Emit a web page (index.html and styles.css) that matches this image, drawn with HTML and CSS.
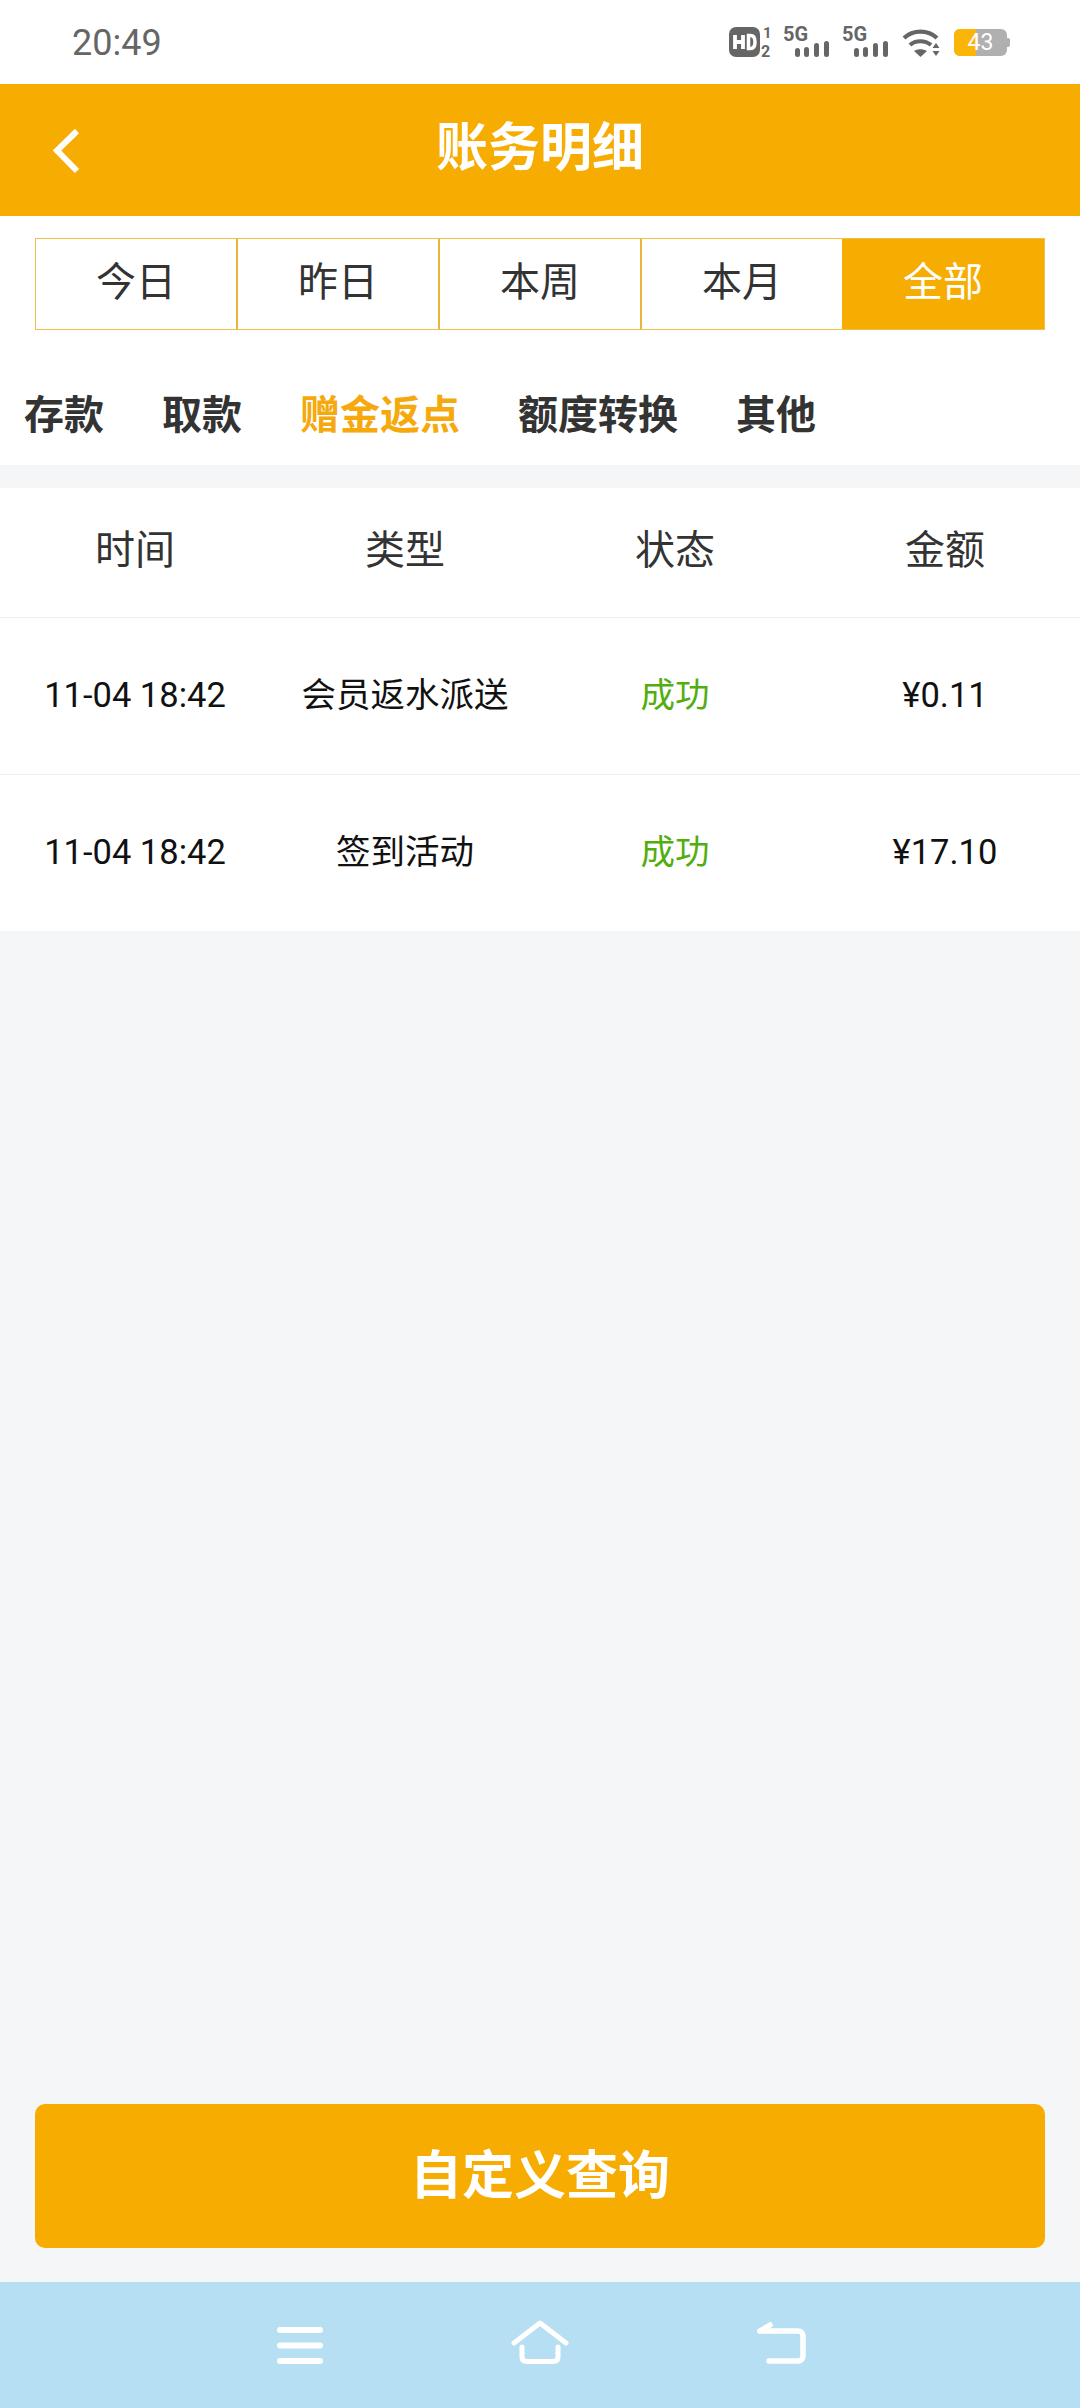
FILE: index.html
```html
<!DOCTYPE html>
<html lang="zh-CN">
<head>
<meta charset="utf-8">
<title>账务明细</title>
<link rel="stylesheet" href="styles.css">
</head>
<body>
<div class="page">
  <div class="status">
    <span class="clock">20:49</span>
    <div class="status-icons">
      <svg class="si" width="43" height="46" viewBox="0 -8 43 46"><rect x="0" y="0" width="31" height="30" rx="7" fill="#666"/><path d="M6 8v14M14 8v14M6 15h8" stroke="#fff" stroke-width="3.800" fill="none"/><path d="M19.500 8.500v13h2c3 0 4.500-2.300 4.500-6.500s-1.500-6.500-4.500-6.500z" stroke="#fff" stroke-width="3.500" fill="none"/><text x="34" y="11" class="si-t">1</text><text x="32" y="30" class="si-t2">2</text></svg>
      <svg class="si" width="48" height="46" viewBox="0 -8 48 46"><text x="0" y="14" class="si-5g">5G</text><g fill="#666"><rect x="12" y="21" width="5" height="9" rx="2.500"/><rect x="21" y="20" width="5" height="10" rx="2.500"/><rect x="31" y="16" width="5" height="14" rx="2.500"/><rect x="41" y="14" width="5" height="16" rx="2.500"/></g></svg>
      <svg class="si" width="48" height="46" viewBox="0 -8 48 46"><text x="0" y="14" class="si-5g">5G</text><g fill="#666"><rect x="12" y="21" width="5" height="9" rx="2.500"/><rect x="21" y="20" width="5" height="10" rx="2.500"/><rect x="31" y="16" width="5" height="14" rx="2.500"/><rect x="41" y="14" width="5" height="16" rx="2.500"/></g></svg>
      <svg class="si" width="40" height="46" viewBox="-2 -8 40 46"><g fill="none" stroke="#666" stroke-width="4.200"><path d="M1 11c9-8.500 24-8.500 33 0"/><path d="M7 18c5.500-5 15-5 21 0"/></g><path d="M11 24c3.500-2.500 9-2.500 13 0l-6.500 6z" fill="#666"/><path d="M33 16l3.500 5h-7zM29.500 24h7l-3.500 5z" fill="#666"/></svg>
      <div class="battery"><div class="battery-fill"></div><span class="battery-num">43</span><div class="battery-cap"></div></div>
    </div>
  </div>

  <header class="topbar">
    <svg class="back" width="28" height="46" viewBox="0 0 28 46"><path d="M25 3L5 22.500 25 43" fill="none" stroke="#fff" stroke-width="6"/></svg>
    <h1 class="title">账务明细</h1>
  </header>

  <section class="filters">
    <div class="segments">
      <div class="seg">今日</div>
      <div class="seg">昨日</div>
      <div class="seg">本周</div>
      <div class="seg">本月</div>
      <div class="seg seg-on">全部</div>
    </div>
    <nav class="tabs">
      <span class="tab">存款</span>
      <span class="tab">取款</span>
      <span class="tab tab-on">赠金返点</span>
      <span class="tab">额度转换</span>
      <span class="tab">其他</span>
    </nav>
  </section>

  <section class="table">
    <div class="row head">
      <div>时间</div><div>类型</div><div>状态</div><div>金额</div>
    </div>
    <div class="row item">
      <div class="time">11-04 18:42</div><div>会员返水派送</div><div class="ok">成功</div><div class="time">¥0.11</div>
    </div>
    <div class="row item">
      <div class="time">11-04 18:42</div><div>签到活动</div><div class="ok">成功</div><div class="time">¥17.10</div>
    </div>
  </section>

  <div class="spacer"></div>

  <div class="action"><button class="query">自定义查询</button></div>

  <footer class="navbar">
    <svg width="46" height="37" viewBox="0 0 46 37"><g stroke="#fff" stroke-width="6" stroke-linecap="round"><path d="M3 3h40M3 18.500h40M3 34h40"/></g></svg>
    <svg width="58" height="44" viewBox="0 0 58 44"><g fill="none" stroke="#fff" stroke-width="5" stroke-linecap="round" stroke-linejoin="round"><path d="M3 23L29 3l26 20"/><path d="M11 27v10c0 3 1.500 4.500 4.500 4.500h27c3 0 4.500-1.500 4.500-4.500V27"/></g></svg>
    <svg width="50" height="42" viewBox="0 0 50 42"><g fill="none" stroke="#fff" stroke-width="5.500" stroke-linecap="round" stroke-linejoin="round"><path d="M3 9h38c3 0 5 2 5 5v20c0 3-2 5-5 5H12"/><path d="M3 9l10-6"/></g></svg>
  </footer>
</div>
</body>
</html>
```
FILE: styles.css
```css
* { box-sizing: border-box; }
html, body { margin: 0; padding: 0; }
body {
  width: 1080px;
  height: 2408px;
  font-family: "Noto Sans CJK SC", "Noto Sans", sans-serif;
  background: #f4f6f8;
}
.page { display: flex; flex-direction: column; height: 2408px; }

.status {
  height: 84px;
  background: #fff;
  display: flex;
  align-items: center;
  justify-content: space-between;
  padding: 0 73px 0 72px;
}
.clock { font-family: Roboto, sans-serif; font-size: 36px; color: #666; padding-top: 2px; }
.status-icons { display: flex; align-items: center; gap: 11px; }
.si { display: block; }
.si-t, .si-t2 { font-family: Roboto, sans-serif; font-weight: 700; fill: #666; }
.si-t { font-size: 15px; }
.si-t2 { font-size: 16px; }
.si-5g { font-family: Roboto, sans-serif; font-size: 20px; font-weight: 700; fill: #666; }
.battery {
  width: 53px; height: 27px; background: #b0b0b0; border-radius: 6px;
  display: flex; align-items: center; justify-content: center;
  position: relative;
  margin-left: 2px;
}
.battery-fill { position: absolute; left: 0; top: 0; bottom: 0; width: 22px; background: #fbb508; border-radius: 6px 0 0 6px; }
.battery-num { position: relative; font-family: Roboto, sans-serif; font-size: 23px; color: #fff; line-height: 27px; }
.battery-cap { position: absolute; right: -3px; top: 9px; width: 3px; height: 9px; background: #b0b0b0; border-radius: 0 2px 2px 0; }

.topbar {
  height: 132px;
  background: #f7ac02;
  position: relative;
  display: flex;
  align-items: center;
  justify-content: center;
  padding-bottom: 12px;
}
.back { position: absolute; left: 52px; top: 44px; }
.title { margin: 0; color: #fff; font-size: 52px; font-weight: 700; line-height: 1; }

.filters { background: #fff; height: 249px; padding-top: 22px; }
.segments { display: flex; margin: 0 35px; height: 92px; border: 1px solid #f0c04d; }
.seg {
  flex: 0 0 202px;
  display: flex; align-items: center; justify-content: center;
  font-size: 40px; color: #333;
  padding-bottom: 10px;
  border-left: 2px solid #e9b33c;
}
.seg:first-child { flex-basis: 200px; border-left: 0; }
.seg-on { flex: 1 1 0; background: #f7ac02; color: #fff; border-left: 0; }
.tabs { display: flex; gap: 58px; padding: 28px 24px 0; height: 135px; align-items: center; }
.tab { font-size: 40px; font-weight: 700; color: #333; }
.tab-on { color: #f5a90c; }

.table { margin-top: 23px; background: #fff; }
.row { display: grid; grid-template-columns: repeat(4, 270px); text-align: center; align-items: center; }
.head { height: 129px; font-size: 40px; color: #333; padding-bottom: 12px; }
.item { height: 157px; font-size: 34.500px; color: #111; border-top: 1px solid #eeeeee; padding-bottom: 8px; }
.time { font-family: Roboto, "Noto Sans CJK SC", sans-serif; margin-top: 5px; }
.ok { color: #52ad0f; }

.spacer { flex: 1; }
.action { padding: 0 35px 34px; }
.query {
  display: block;
  width: 100%;
  height: 144px;
  border: 0;
  border-radius: 10px;
  background: #f7ac02;
  color: #fff;
  font-family: "Noto Sans CJK SC", sans-serif;
  font-size: 52px;
  font-weight: 700;
  padding: 0 0 10px;
}
.navbar {
  height: 126px;
  background: #b6dff3;
  display: flex;
  align-items: flex-end;
  justify-content: center;
  gap: 188px;
  padding: 0 0 44px 4px;
}
```
